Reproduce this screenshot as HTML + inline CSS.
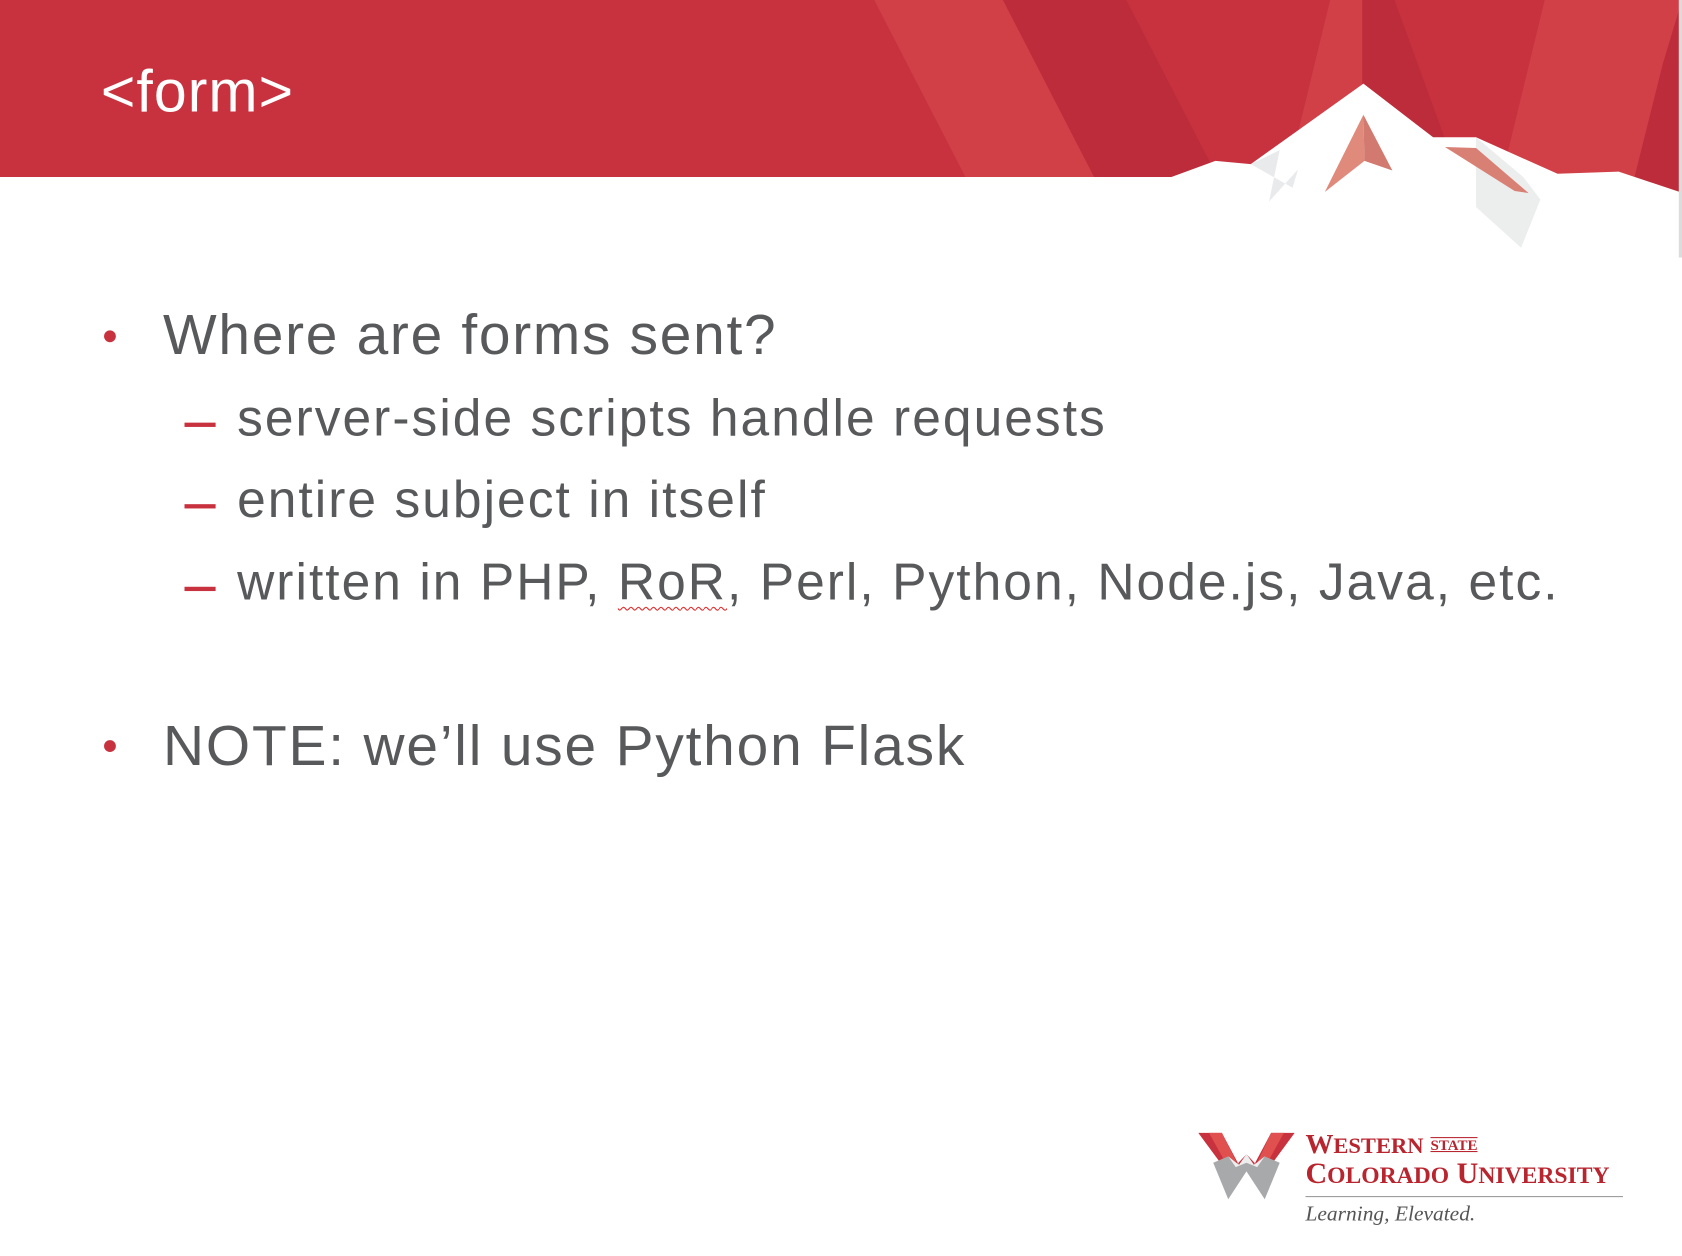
<!DOCTYPE html>
<html><head><meta charset="utf-8"><style>
html,body{margin:0;padding:0;background:#fff;overflow:hidden}
#w{position:absolute;left:0;top:0;width:1568px;height:1171px;transform:scale(1.0727);transform-origin:0 0;font-family:"Liberation Sans",Arial,sans-serif}
.t{position:absolute;color:#58595b;white-space:nowrap}
.m{font-size:53px;letter-spacing:1.6px}
.s{font-size:48px;letter-spacing:1.9px}
.b{position:absolute;width:11px;height:11px;border-radius:50%;background:#c8323f}
.d{position:absolute;width:29px;height:4px;background:#c8323f}
.serif{font-family:"Liberation Serif",serif;color:#b8252f;position:absolute;white-space:nowrap}
</style></head><body><div id="w">
<svg width="1568" height="240" style="position:absolute;left:0;top:0">
<rect x="0" y="0" width="1568" height="165" fill="#c8323f"/>
<polygon points="815,0 935,0 1020,165 900,165" fill="#d13f47"/>
<polygon points="935,0 1050,0 1135,165 1020,165" fill="#bc2c3a"/>
<polygon points="1240,0 1270,0 1270,165 1200,165" fill="#d13f47"/>
<polygon points="1270,0 1300,0 1360,165 1270,165" fill="#bc2c3a"/>
<polygon points="1440,0 1568,0 1568,60 1520,180 1400,165" fill="#d13f47"/>
<polygon points="1550,60 1568,0 1568,180 1520,180" fill="#bc2c3a"/>
<polygon points="1092,165 1133,150 1166,153 1271,78 1336,128 1376,128 1452,162 1509,160 1566,179 1566,240 1092,240" fill="#fff"/>
<polygon points="1166,153 1193,140 1183,188 1210,158 1205,175" fill="#e9eaeb"/>
<polygon points="1376,128 1376,193 1418,231 1436,186 1420,165" fill="#eceded"/>
<polygon points="1271,107 1235,179 1272,150" fill="#e08a7c"/>
<polygon points="1271,107 1272,150 1298,159" fill="#d27a70"/>
<polygon points="1347,137 1376,138 1425,180 1412,178" fill="#d98074"/>
<rect x="1565" y="0" width="3" height="1171" fill="#dcdcdc"/>
</svg>
<div class="t" style="left:94px;top:53px;font-size:55px;color:#fff;letter-spacing:1px">&lt;form&gt;</div>
<div class="b" style="left:97px;top:308px"></div>
<div class="t m" style="left:152px;top:282px">Where are forms sent?</div>
<div class="d" style="left:172px;top:394px"></div>
<div class="t s" style="left:221px;top:363px">server-side scripts handle requests</div>
<div class="d" style="left:172px;top:470px"></div>
<div class="t s" style="left:221px;top:439px">entire subject in itself</div>
<div class="d" style="left:172px;top:547px"></div>
<div class="t s" style="left:221px;top:516px">written in PHP, <span style="text-decoration:underline wavy #d33;text-underline-offset:6px;text-decoration-thickness:1px">RoR</span>, Perl, Python, Node.js, Java, etc.</div>
<div class="b" style="left:97px;top:690px"></div>
<div class="t m" style="left:152px;top:665px;letter-spacing:1.7px">NOTE: we’ll use Python Flask</div>
<svg width="90" height="64" style="position:absolute;left:1117px;top:1056px" viewBox="0 0 90 64">
<polygon points="0,0 22,0 38,30 45,20 52,30 68,0 90,0 62,38 45,20 28,38" fill="#c8323f"/>
<polygon points="10,0 22,0 36,28 30,36" fill="#e0504f"/>
<polygon points="68,0 80,0 60,36 54,30" fill="#e0504f"/>
<polygon points="14,28 28,22 38,30 45,20 52,30 62,22 76,28 62,62 45,36 28,62" fill="#a8a9ab"/>
<polygon points="28,22 38,30 45,20 52,30 62,22 55,32 45,28 35,32" fill="#eee"/>
</svg>
<div class="serif" style="left:1217px;top:1052px;font-size:26px;font-weight:bold">W<span style="font-size:21px">ESTERN</span> <span style="font-size:14px;text-decoration:underline overline;vertical-align:3px">STATE</span></div>
<div class="serif" style="left:1217px;top:1079px;font-size:28px;font-weight:bold">C<span style="font-size:22px">OLORADO</span> U<span style="font-size:22px">NIVERSITY</span></div>
<div style="position:absolute;left:1217px;top:1115px;width:296px;height:1px;background:#999"></div>
<div class="serif" style="left:1217px;top:1121px;font-size:20px;font-style:italic;color:#555">Learning, Elevated.</div>
</div></body></html>
